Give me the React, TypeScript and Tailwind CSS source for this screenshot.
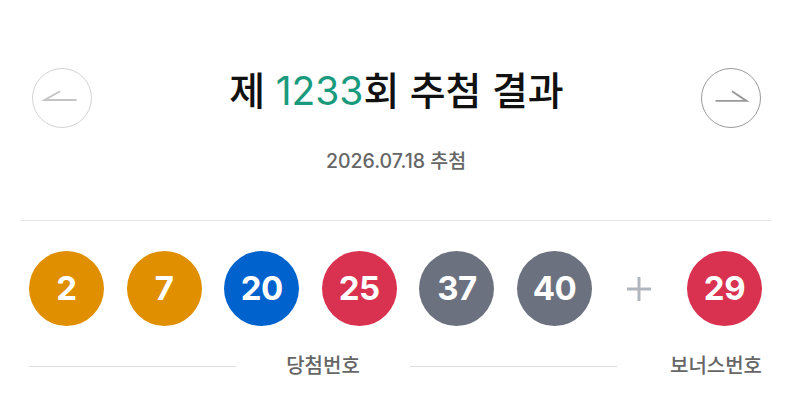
import React from "react";

type Ball = { n: number; color: string };

const winning: Ball[] = [
  { n: 2, color: "bg-[#df8f00]" },
  { n: 7, color: "bg-[#df8f00]" },
  { n: 20, color: "bg-[#0062cc]" },
  { n: 25, color: "bg-[#d93150]" },
  { n: 37, color: "bg-[#6c717f]" },
  { n: 40, color: "bg-[#6c717f]" },
];

const bonus: Ball = { n: 29, color: "bg-[#d93150]" };

const font = "font-['Inter','Noto_Sans_CJK_KR',sans-serif]";

function NumberBall({ ball }: { ball: Ball }) {
  return (
    <div
      className={`${ball.color} w-[75px] h-[75px] rounded-full flex items-center justify-center text-white text-[33px] font-bold tracking-[-0.5px]`}
    >
      {ball.n}
    </div>
  );
}

function ArrowButton({ dir, disabled }: { dir: "prev" | "next"; disabled?: boolean }) {
  const tone = disabled ? "border-[#d4d4d4] text-[#c4c4c4]" : "border-[#9a9a9a] text-[#999999]";
  return (
    <button
      className={`w-[60px] h-[60px] rounded-full border ${tone} flex items-center justify-center`}
    >
      <svg width="60" height="60" viewBox="0 0 60 60" fill="none" stroke="currentColor" strokeWidth="2">
        {dir === "prev" ? (
          <path d="M45 32H12L28 23" />
        ) : (
          <path d="M14 33H46L31 23" />
        )}
      </svg>
    </button>
  );
}

export default function App() {
  return (
    <div className={`w-[799px] h-[404px] bg-white ${font}`}>
      <div className="ml-[21px] w-[750px] pt-[68px]">
        {/* round header */}
        <div className="flex items-center justify-between pl-[11px] pr-[10px]">
          <ArrowButton dir="prev" disabled />
          <h1 className="mb-[14px] text-[39px] leading-[46px] font-medium text-[#111111]">
            제 <span className="font-normal text-[#1a9a7c]">1233</span>회 추첨 결과
          </h1>
          <ArrowButton dir="next" />
        </div>

        <p className="mt-[21px] text-center text-[19.5px] leading-[24px] font-medium text-[#666666]">
          2026.07.18 추첨
        </p>

        <div className="mt-[47px] border-t border-[#e5e5e5]" />

        {/* drawn numbers */}
        <div className="mt-[30px] pl-[8px] flex items-center">
          <div className="flex gap-[22.6px]">
            {winning.map((b) => (
              <NumberBall key={b.n} ball={b} />
            ))}
          </div>
          <div className="w-[95px] flex justify-center">
            <svg width="24" height="24" viewBox="0 0 24 24" stroke="#b1b5be" strokeWidth="3">
              <path d="M12 0V24M0 12H24" />
            </svg>
          </div>
          <NumberBall ball={bonus} />
        </div>

        <div className="mt-[28px] pl-[8px] flex items-center text-[20px] leading-[24px] font-medium text-[#666666]">
          <div className="w-[588px] flex items-center">
            <div className="flex-1 border-t border-[#dddddd]" />
            <span className="mx-[50px]">당첨번호</span>
            <div className="flex-1 border-t border-[#dddddd]" />
          </div>
          <span className="ml-[53px]">보너스번호</span>
        </div>
      </div>
    </div>
  );
}
